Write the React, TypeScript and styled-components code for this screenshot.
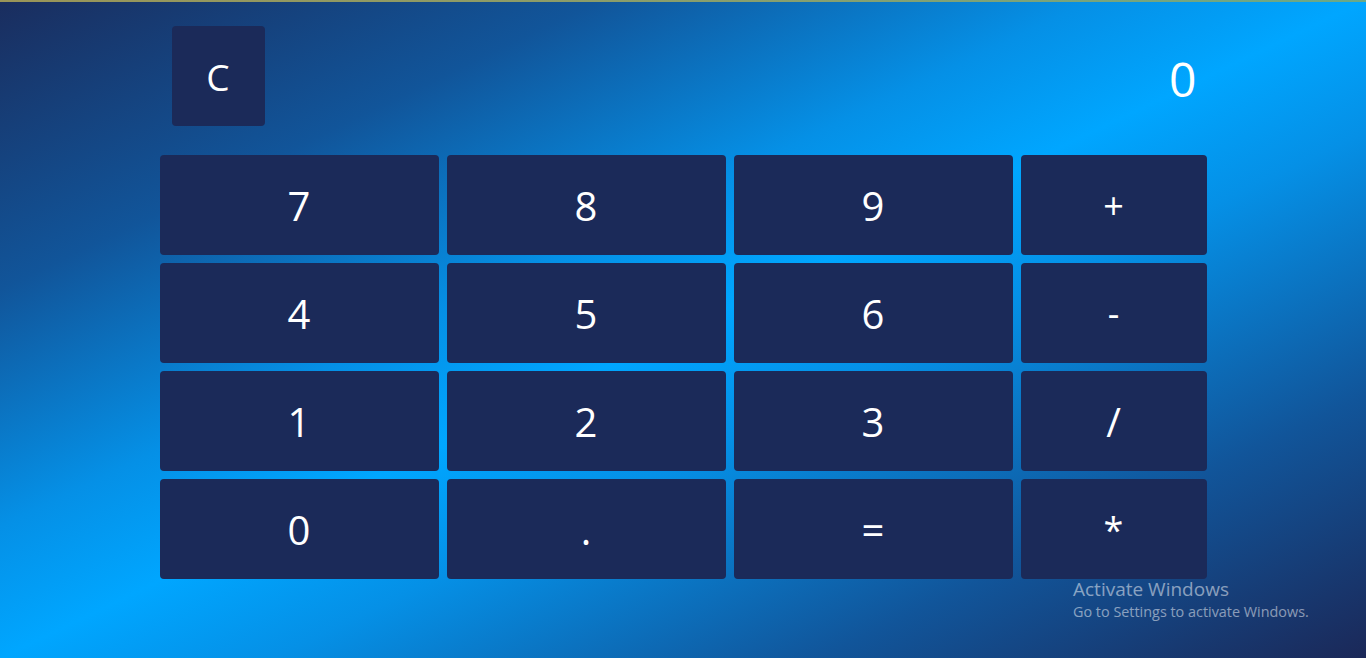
import React, { useState } from "react";
import styled, { createGlobalStyle } from "styled-components";

const GlobalStyle = createGlobalStyle`
  html, body { margin: 0; padding: 0; height: 100%; }
  body { font-family: "Open Sans", "Noto Sans", sans-serif; overflow: hidden; }
  #root { height: 100%; }
`;

const Page = styled.div`
  position: relative;
  box-sizing: border-box;
  width: 100%;
  height: 658px;
  padding-top: 26px;
  background: linear-gradient(
    to bottom right,
    #1a2d5e 0%,
    #11559a 22%,
    #0590e6 40%,
    #00a6ff 50%,
    #0590e6 60%,
    #11559a 80%,
    #1b2858 100%
  );
  &::before {
    content: "";
    position: absolute;
    left: 0;
    right: 0;
    top: 0;
    height: 2px;
    background: linear-gradient(to right, #9a9558, #86a070 60%, #6aa888);
  }
`;

const Calculator = styled.div`
  width: 1047px;
  margin: 0 auto;
`;

const Header = styled.div`
  display: flex;
  align-items: center;
  justify-content: space-between;
  padding: 0 10px 0 12px;
  height: 100px;
  margin-bottom: 29px;
`;

const ClearButton = styled.button`
  width: 93px;
  height: 100px;
  border: none;
  border-radius: 4px;
  background: #1b2a59;
  color: #ffffff;
  font-family: "Open Sans", sans-serif;
  font-size: 37px;
  padding: 0;
  cursor: pointer;
`;

const Display = styled.div`
  color: #ffffff;
  font-size: 48px;
  line-height: 1;
  margin-top: 6px;
`;

const Keypad = styled.div`
  display: grid;
  grid-template-columns: 3fr 3fr 3fr 2fr;
  grid-auto-rows: 100px;
  gap: 8px;
`;

const Key = styled.button<{ $small?: boolean }>`
  border: none;
  border-radius: 4px;
  background: #1b2a59;
  color: #ffffff;
  font-family: "Open Sans", sans-serif;
  font-size: ${(p) => (p.$small ? "36px" : "40px")};
  padding: 0;
  padding-top: 1px;
  cursor: pointer;
`;

const Watermark = styled.div`
  position: absolute;
  left: 1073px;
  top: 577px;
  color: rgba(255, 255, 255, 0.5);
  font-family: "Open Sans", sans-serif;
  pointer-events: none;
`;

const WatermarkTitle = styled.div`
  font-size: 19px;
  line-height: 25px;
`;

const WatermarkSub = styled.div`
  font-size: 14.4px;
  line-height: 20px;
`;

const keys = ["7", "8", "9", "+", "4", "5", "6", "-", "1", "2", "3", "/", "0", ".", "=", "*"];

export default function App() {
  const [value, setValue] = useState("0");
  return (
    <>
      <GlobalStyle />
      <Page>
        <Calculator>
          <Header>
            <ClearButton onClick={() => setValue("0")}>C</ClearButton>
            <Display>{value}</Display>
          </Header>
          <Keypad>
            {keys.map((k) => (
              <Key key={k} $small={k === "+" || k === "*" || k === "-"}>
                {k}
              </Key>
            ))}
          </Keypad>
        </Calculator>
        <Watermark>
          <WatermarkTitle>Activate Windows</WatermarkTitle>
          <WatermarkSub>Go to Settings to activate Windows.</WatermarkSub>
        </Watermark>
      </Page>
    </>
  );
}
